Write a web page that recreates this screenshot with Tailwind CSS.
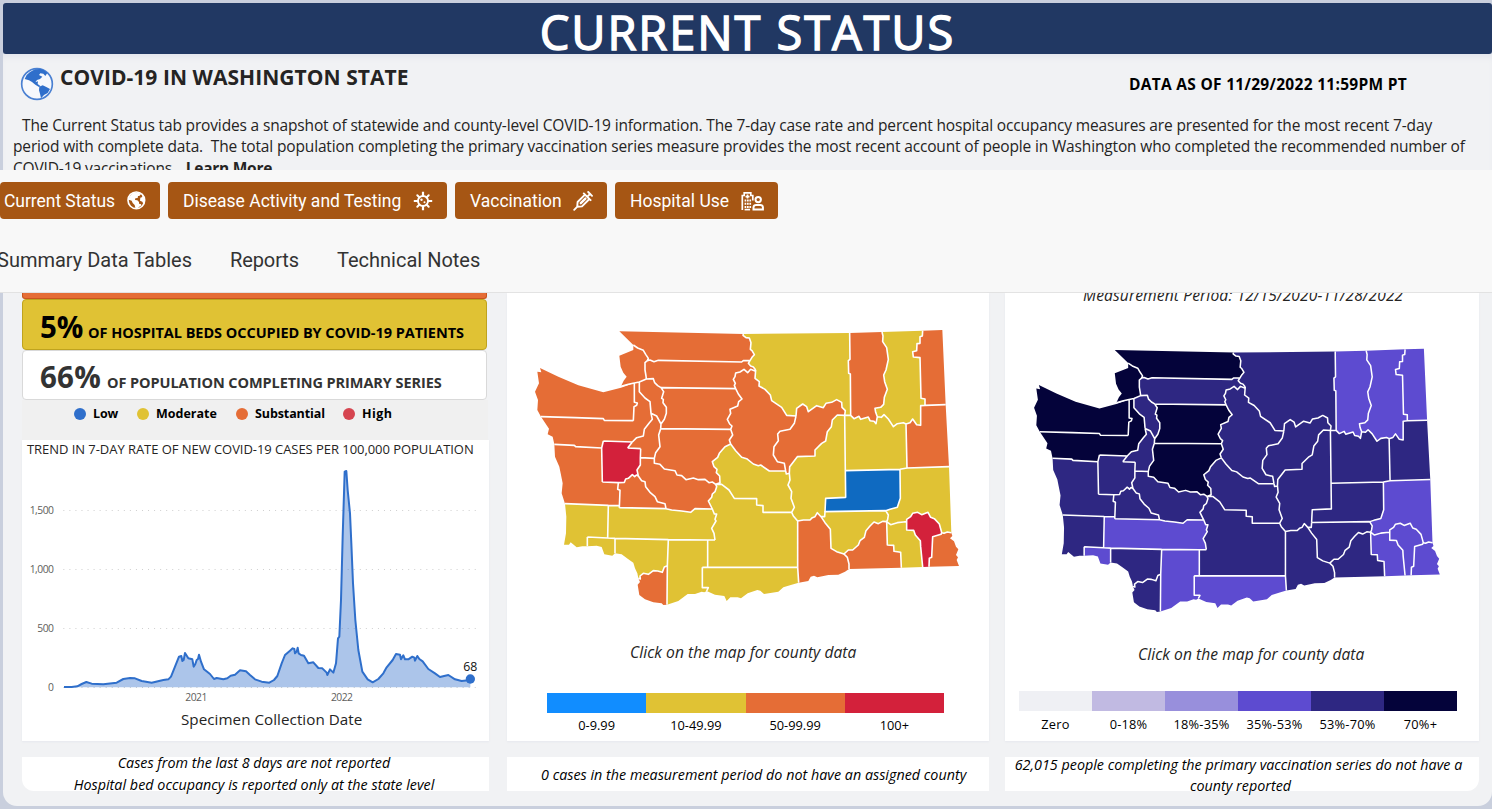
<!DOCTYPE html>
<html lang="en">
<head>
<meta charset="utf-8">
<title>COVID-19 Current Status</title>
<script src="https://cdn.jsdelivr.net/npm/@tailwindcss/browser@4"></script>
</head>
<body class="w-[1492px] h-[809px] overflow-hidden bg-[#c9cfdd] font-['Open_Sans','Noto_Sans',sans-serif] text-[#252423] flex flex-col">

<header class="h-[170px] shrink-0 overflow-hidden pl-[3px] pt-[3px]">
  <div class="h-[51px] bg-[#213863] rounded-[3px] flex justify-center items-center text-white text-[47px] leading-[51px] whitespace-nowrap [-webkit-text-stroke:1.4px_white]"><span class="mt-[8px] tracking-[1.9px]">CURRENT STATUS</span></div>
  <div class="h-[116px] bg-[#f1f2f4] shadow-[inset_0_6px_6px_-3px_#e2e5ec]">
    <div class="flex h-[62px] pl-[17px]">
      <svg class="mt-[13px] w-[34px] h-[34px]" viewBox="0 0 102 102" fill="#2f6fcb"><circle cx="51" cy="51" r="46" fill="#f6f8fc" stroke="#4a80d2" stroke-width="5"/><path d="M14 36 20 24 30 15 45 7 60 6 71 9 82 18 76 27 70 20 61 19 57 24 67 29 60 36 51 39 46 46 54 43 53 51 62 58 57 60 46 53 36 45 27 40Z"/><path d="M58 59 68 55 79 60 90 66 83 78 72 84 63 94 60 80 57 70Z"/></svg>
      <h1 class="ml-[6px] mt-[9px] text-[21px] leading-[28px] font-bold whitespace-nowrap tracking-[0.05px] h-[28px]">COVID-19 IN WASHINGTON STATE</h1>
      <div class="ml-auto mr-[85px] mt-[20px] text-[15.5px] leading-[20px] h-[20px] font-bold text-black whitespace-nowrap tracking-[0.29px]">DATA AS OF 11/29/2022 11:59PM PT</div>
    </div>
    <div class="pl-[10px] -mt-[1px] text-[15.5px] leading-[21.2px] whitespace-nowrap tracking-[-0.153px]">
      <p class="pl-[9px] tracking-[-0.156px]">The Current Status tab provides a snapshot of statewide and county-level COVID-19 information. The 7-day case rate and percent hospital occupancy measures are presented for the most recent 7-day</p>
      <p>period with complete data.&nbsp; The total population completing the primary vaccination series measure provides the most recent account of people in Washington who completed the recommended number of</p>
      <p class="mt-[1px]">COVID-19 vaccinations. &nbsp;<b class="ml-[2px] tracking-[-0.25px]">Learn More</b></p>
    </div>
  </div>
</header>

<nav class="h-[123px] shrink-0 bg-[#f8f8f8] border-b border-[#e2e2e2] font-[Roboto] whitespace-nowrap overflow-hidden">
  <div class="flex gap-2 mt-[12px] text-white text-[17.5px] leading-[37px] h-[37px] *:bg-[#a65614] *:rounded-[4px] *:flex *:items-center *:h-[37px]">
    <a class="w-[160px] pl-[4px]"><span class="w-[111px] tracking-[-0.05px] pt-[2px]">Current Status</span>
      <svg class="ml-[12px] w-[19px] h-[19px]" viewBox="0 0 57 57" fill="#fff"><circle cx="28" cy="28" r="25" fill="none" stroke="#fff" stroke-width="5"/><path d="M7 18 17 6 33 4 42 9 37 15 33 15 32 21 25 22 24 27 31 28 36 33 36 38 41 39 44 43 36 48 30 54 25 50 23 42 17 36 14 29 5 26Z"/><path d="M45 10 53 22 54 36 49 38 46 32 39 29 40 20 46 18Z"/></svg></a>
    <a class="w-[279px] pl-[15px]"><span class="w-[218px] pt-[2px]">Disease Activity and Testing</span>
      <svg class="ml-[12px] w-[20px] h-[20px]" viewBox="0 0 20 20" fill="none" stroke="#fff"><circle cx="10" cy="10" r="5" stroke-width="2"/><path stroke-width="2.2" d="M10 5V.8M10 15v4.200M5 10H.8M15 10h4.200"/><path stroke-width="2" stroke-linecap="round" d="M6.500 6.500 4.300 4.300M13.500 6.500 15.700 4.300M6.500 13.500 4.300 15.700M13.500 13.500 15.700 15.700"/><g fill="#fff" stroke="none"><circle cx="8.500" cy="8.800" r="1.200"/><circle cx="11.500" cy="11.200" r="1"/></g></svg></a>
    <a class="w-[152px] pl-[15px]"><span class="w-[92px] pt-[2px]">Vaccination</span>
      <svg class="ml-[11px] w-[20px] h-[20px]" viewBox="0 0 20 20" fill="none" stroke="#fff" stroke-width="1.900" stroke-linecap="round" stroke-linejoin="round"><path d="M1.200 18.800 4.800 15.200M4.200 15.800 4.600 11 12 3.600 16.400 8 9 15.400ZM10.800 2.400 17.600 9.200M14.500 5.500 17.200 2.800M15.200 1 19 4.800"/><path d="M7.800 12.200 12.400 7.600" stroke-width="2.400"/></svg></a>
    <a class="w-[163px] pl-[15px]"><span class="w-[99px] pt-[2px]">Hospital Use</span>
      <svg class="ml-[12px] w-[24px] h-[20px]" viewBox="0 0 24 20" fill="none" stroke="#fff" stroke-width="1.700"><path d="M1.300 19V4.500H3.200V1.800H9.800V4.500H11.800V9.500"/><path d="M6.500 3.600v4M4.500 5.600h4"/><path d="M3.600 9.500h6.500M3.600 12.700h6.500M3.600 15.900h6.500" stroke-dasharray="1.700 .7" stroke-width="2"/><path d="M3.600 18.600h5.500"/><circle cx="17.200" cy="8.600" r="2.700" stroke-width="2"/><path d="M12.500 18.400v-2.200q.3-2.200 2.600-2.200h4.200q2.300 0 2.600 2.200v2.200z" stroke-width="2"/></svg></a>
  </div>
  <div class="flex -ml-[3px] mt-[28px] text-[20px] leading-[26px] text-[#333] gap-[38px]">
    <span class="w-[195px]">Summary Data Tables</span><span class="w-[69px] tracking-[-0.1px]">Reports</span><span>Technical Notes</span>
  </div>
</nav>

<main class="h-[516px] shrink-0 pl-[3px] pb-[3px]">
<div class="h-[513px] bg-[#f1f2f4] rounded-b-[14px] pl-[19px] flex">

  <section class="w-[467px] flex flex-col">
    <div class="h-[6px] w-[465px] bg-[#e56d36] border-x border-b border-[#c9551f] rounded-b-[3px]"></div>
    <div class="h-[51px] w-[465px] bg-[#e0c234] border border-[#bfa31e] rounded-[4px] pl-[17px] text-black font-bold whitespace-nowrap flex items-baseline leading-[54px]">
      <span class="text-[29.5px] w-[48px] tracking-[-0.2px]">5%</span><span class="text-[14.5px] tracking-[-0.042px]">OF HOSPITAL BEDS OCCUPIED BY COVID-19 PATIENTS</span></div>
    <div class="h-[50px] w-[465px] bg-white border border-[#d9d9d9] rounded-[4px] pl-[17px] text-[#333] font-bold whitespace-nowrap flex items-baseline leading-[52px]">
      <span class="text-[29.5px] w-[67px] tracking-[0.2px]">66%</span><span class="text-[14.5px] tracking-[-0.08px]">OF POPULATION COMPLETING PRIMARY SERIES</span></div>
    <div class="h-[40px] w-[466px] bg-[#f0f0f0] text-black text-[12.5px] font-bold flex leading-[28px] pl-[52px] whitespace-nowrap">
      <i class="w-3 h-3 rounded-full bg-[#2f6fcb] mt-[8px] mr-[7px]"></i><span class="w-[44px] tracking-[-0.15px]">Low</span>
      <i class="w-3 h-3 rounded-full bg-[#e0c234] mt-[8px] mr-[7px]"></i><span class="w-[80px]">Moderate</span>
      <i class="w-3 h-3 rounded-full bg-[#e56d36] mt-[8px] mr-[7px]"></i><span class="w-[88px] tracking-[-0.1px]">Substantial</span>
      <i class="w-3 h-3 rounded-full bg-[#d64550] mt-[8px] mr-[7px]"></i><span class="tracking-[0.4px]">High</span>
    </div>
    <div class="h-[301px] bg-white shadow-[0_1px_2px_#e6e8ee] flex flex-col">
      <h2 class="text-[13px] leading-[18px] h-[18px] pl-[5px] whitespace-nowrap tracking-[-0.05px]">TREND IN 7-DAY RATE OF NEW COVID-19 CASES PER 100,000 POPULATION</h2>
      <svg class="w-[467px] h-[246px]" viewBox="66 -6 1401 738">
        <g stroke="#cfcfcf" stroke-width="3" stroke-dasharray="3 15.15"><path d="M190 151.500H1440M190 328.500H1440M190 505.500H1440M190 682.500H1440"/></g>
        <path id="area" fill="#2f6fcb" fill-opacity=".4"/>
        <path id="line" fill="none" stroke="#2f6fcb" stroke-width="6" stroke-linejoin="round"/>
        <circle cx="1411" cy="657" r="14" fill="#2f6fcb"/>
        <g font-size="31" fill="#605e5c" text-anchor="end"><text x="162" y="161" textLength="73">1,500</text><text x="162" y="338" textLength="73">1,000</text><text x="162" y="515" textLength="50">500</text><text x="162" y="692">0</text></g>
        <g font-size="31" fill="#605e5c" text-anchor="middle"><text x="589" y="722" textLength="66">2021</text><text x="1026" y="722" textLength="66">2022</text></g>
        <text x="1411" y="633" font-size="37" text-anchor="middle" fill="#111">68</text>
      </svg>
      <p class="text-[15.2px] leading-[20px] h-[20px] mt-[5px] pl-[159px] whitespace-nowrap tracking-[0.04px]">Specimen Collection Date</p>
    </div>
    <div class="mt-4 h-[34px] bg-white rounded-bl-[12px] text-[14.3px] leading-[22px] italic text-black text-center whitespace-nowrap pr-[3px]">
      <p class="-mt-[5px]">Cases from the last 8 days are not reported</p>
      <p class="tracking-[0.03px]">Hospital bed occupancy is reported only at the state level</p>
    </div>
  </section>

  <section class="ml-[18px] w-[482px] flex flex-col">
    <div class="h-[448px] bg-white shadow-[0_1px_2px_#e6e8ee] flex flex-col">
      <svg class="mt-[27px] ml-[18px] w-[460px] h-[300px] shrink-0" viewBox="0 0 1380 900"><g id="map1"></g></svg>
      <p class="mt-[22px] h-[20px] leading-[20px] text-[15.6px] italic pl-[123px] whitespace-nowrap tracking-[0.05px]">Click on the map for county data</p>
      <div class="mt-[31px] ml-[40px] w-[397px] h-5 grid grid-cols-4"><i class="bg-[#118dff]"></i><i class="bg-[#e0c234]"></i><i class="bg-[#e56d36]"></i><i class="bg-[#d3213b]"></i></div>
      <div class="mt-[2px] ml-[40px] w-[397px] grid grid-cols-4 text-center text-[12.8px] leading-[20px] text-black"><p>0-9.99</p><p>10-49.99</p><p>50-99.99</p><p>100+</p></div>
    </div>
    <div class="mt-4 h-[34px] bg-white text-[14.3px] leading-[35px] italic text-black pl-[34px] whitespace-nowrap tracking-[0.02px]">0 cases in the measurement period do not have an assigned county</div>
  </section>

  <section class="ml-[16px] w-[474px] flex flex-col">
    <div class="h-[448px] bg-white shadow-[0_1px_2px_#e6e8ee] flex flex-col overflow-hidden">
      <p class="-mt-[8px] h-[20px] leading-[21px] pl-[78px] text-[15.6px] italic whitespace-nowrap tracking-[0.12px]">Measurement Period: 12/15/2020-11/28/2022</p>
      <svg class="mt-[35px] ml-[15px] w-[453px] h-[280px] shrink-0" viewBox="0 0 1359 840"><g id="map2" transform="translate(13.500 -2.500) scale(.957)"></g></svg>
      <p class="mt-[24px] h-[20px] leading-[20px] pl-[133px] text-[15.6px] italic whitespace-nowrap tracking-[0.05px]">Click on the map for county data</p>
      <div class="mt-[27px] ml-[14px] w-[438px] h-5 grid grid-cols-6"><i class="bg-[#eff0f4]"></i><i class="bg-[#c1bae2]"></i><i class="bg-[#988fdc]"></i><i class="bg-[#5d4bd0]"></i><i class="bg-[#2e2782]"></i><i class="bg-[#04033a]"></i></div>
      <div class="mt-[3px] ml-[14px] w-[438px] grid grid-cols-6 text-center text-[12.8px] leading-[20px] text-black whitespace-nowrap tracking-[0.22px]"><p>Zero</p><p>0-18%</p><p>18%-35%</p><p>35%-53%</p><p>53%-70%</p><p>70%+</p></div>
    </div>
    <div class="mt-4 h-[34px] bg-white rounded-br-[12px] text-[14.3px] leading-[21px] italic text-black text-center whitespace-nowrap pr-[7px] tracking-[0.02px]">
      <p class="-mt-[3px]">62,015 people completing the primary vaccination series do not have a</p>
      <p class="pl-[4px]">county reported</p>
    </div>
  </section>
</div>
</main>

<script>
// Case-rate series, in chart units (three per pixel)
const s = '192,681 215,681 232,679 245,672 259,666 275,671 310,673 350,668 370,657 390,654 405,655 425,663 455,668 490,660 505,658 513,650 525,620 537,590 544,588 547,603 551,600 555,579 565,595 577,598 581,620 586,612 590,600 594,597 597,584 603,605 612,628 630,642 642,657 650,654 670,658 682,655 692,647 705,644 720,631 738,634 750,645 765,658 785,665 808,668 822,660 832,648 845,610 855,585 870,572 878,565 883,567 885,580 890,575 893,563 896,580 903,585 912,587 925,610 940,607 955,624 967,625 980,638 982,645 990,628 1000,638 1008,610 1014,535 1018,530 1023,420 1028,230 1034,35 1039,33 1043,90 1050,160 1054,250 1059,370 1066,480 1075,570 1087,635 1103,658 1118,667 1135,657 1150,640 1160,622 1178,600 1188,582 1200,584 1203,598 1210,586 1215,598 1225,598 1237,590 1243,593 1245,602 1252,588 1258,597 1268,604 1285,627 1305,640 1320,651 1345,645 1365,658 1385,663 1411,660';
document.getElementById('line').setAttribute('d', 'M' + s);
document.getElementById('area').setAttribute('d', 'M' + s + ' 1411,682 192,682Z');

// County junctions: western ones first, then eastern ones with their own x origin
const N = {A:[283,34],B:[655,42],C:[675,122],D:[692,150],E:[632,206],F:[325,75],W:[367,122],G:[288,199],J:[328,189],I:[343,186],H:[364,177],K:[325,302],L:[48,290],M:[408,203],P:[378,280],O:[407,326],n:[408,312],Q:[322,366],R:[235,363],S:[308,384],T:[347,386],U:[346,413],u:[388,415],V:[340,468],X:[280,488],Y:[232,486],Z:[230,384],AA:[88,373],AB:[617,328],AC:[617,372],AD:[572,493],AE:[423,566],AF:[562,567],AG:[283,563],AH:[283,557],AI:[120,551],AJ:[250,556],AK:[248,654],AL:[187,679],AM:[187,651],AN:[270,655],AO:[270,700],AP:[570,660],AQ:[548,660],AR:[430,659],AS:[427,737],AT:[340,775],AU:[426,854],AV:[548,742],AW:[532,742],AX:[545,813]};
const E = {AY:[173,742],AZ:[176,788],BA:[155,577],BB:[173,603],BD:[243,590],BE:[312,702],BF:[327,747],BG:[440,605],BH:[484,743],BI:[437,572],BJ:[500,605],BK:[548,741],BL:[605,638],BM:[567,740],BN:[634,638],BO:[657,738],BP:[480,448],BQ:[501,444],BR:[627,440],BS:[316,452],BT:[255,575],BU:[314,286],BV:[332,286],BW:[412,290],BX:[498,312],BY:[555,256],BZ:[617,254],CA:[329,39],CB:[426,36],CC:[548,32],CD:[607,30],CE:[168,288],CF:[137,453],CG:[148,460]};
for (const k in E) N[k] = [E[k][0] + 645, E[k][1]];

// Points between junctions; a leading ">" marks the eastern x origin
const arcs = {
'B C':'654,46 663,53 673,54 678,68 676,88 681,92 688,104 681,112',
'C D':'670,130 677,138 685,141','D E':'690,153 677,148 668,158 657,148 645,156 632,159 630,170 625,178 631,190 628,196',
'W C':'375,120 387,125 400,121 650,126 655,122','F W':'338,84 355,91 362,103 370,115','F G':'325,90 283,107 287,140 295,158 305,170 296,182',
'G J':'310,193','W H':'360,128 360,150 363,168','H M':'385,176 389,188 398,197','J K':'328,247 337,249 335,256 327,260',
'K L':'238,301 235,296 150,293','L J':'37,270 39,240 30,215 42,190 37,155 49,157 45,144 100,170 160,196 235,217 288,203',
'I P':'343,215 360,234 375,245','P n':'395,288','n M':'418,298 424,280 424,262 414,248 415,238 410,235 416,215','P Q':'382,298 372,310 358,328 355,348 335,353',
'L AA':'60,308 72,326 68,343 83,350','AA Z':'148,376 152,380','Q S':'','U V':'346,435 336,450','V X':'334,465 329,470 322,464 310,475 302,477 298,487',
'M E':'','E AB':'640,222 651,237 641,245 638,258 615,268 617,280 607,298 614,312 621,318','AB AC':'623,345 613,360','AC AD':'600,380 583,400 578,412 562,425 567,440 576,448 574,458 584,468 585,488',
'n O':'','O u':'401,345 405,380 392,398','u AD':'388,430 405,433 418,447 450,452 456,465 470,467 483,479 505,474 520,479 540,478 552,488 562,486',
'V AE':'350,482 360,485 362,500 375,517 390,530 397,545 420,551','AE AF':'440,570 470,573 497,577 510,566','AD AF':'575,500 570,515 562,522 560,532 550,543',
'X AG':'278,508 285,511','AI AA':'110,520 113,490 107,460 103,440 90,410','AI AL':'124,590 123,640 117,674 132,674 137,667 155,682 172,679','AL AO':'215,677 230,681 238,703 262,707',
'AF AP':'568,582 575,582 570,598 573,603 560,625 567,640','AO AT':'290,703 308,716 325,728 330,745 337,760','AS AT':'418,741 412,757 398,753 385,752 370,763 355,760 345,768 346,777',
'AT AU':'345,786 338,794 343,825 360,838 385,847 410,850 415,855','AW AX':'532,803 550,803','AU AX':'460,843 488,822 510,822 530,815 538,817',
'AX AZ':'570,824 598,828 605,843 616,832 638,832 648,835 668,820 697,810 706,812 717,822 760,815 775,802 800,794',
'AD BA':'590,493 612,510 628,535 695,536 695,555 714,557 714,577','BB BD':'>190,600 210,600 217,593 225,590 232,578','BA BB':'>160,588','BD BE':'>255,608 271,628 273,685 290,695',
'BE BF':'>322,712 327,732','BE BG':'>325,690 338,690 355,675 360,662 373,652 378,632 390,618 402,606 415,611 428,604','BG BH':'>442,675 461,676 462,694 482,697','AZ BF':'>205,783 212,770 222,767 232,772 265,765 295,764 315,755',
'BI BG':'>445,585 443,598','BG BJ':'>452,614 472,608 490,606','BJ BK':'>500,630 521,631 526,645 541,662 542,680','BJ BL':'>500,598 512,590 518,580 533,577 545,584 564,577 572,592 583,596 598,612 603,630',
'BL BM':'>603,643 578,650 575,712 568,715','BL BN':'>612,640 622,636','BN BO':'>637,648 630,655 642,664 648,680 655,688 648,705 654,712 650,720','BP BI':'>481,535 472,562 450,568',
'BS BT':'>317,532 257,535','BD BT':'>254,590','BV BW':'>342,296 357,289 362,298 385,291 390,302 402,304 408,311','BW BX':'>424,292 432,284 445,297 460,320 472,311 490,308',
'BX BY':'>510,308 518,297 530,314 542,316 542,257','CA BV':'>330,118 325,122 326,160 331,162','CB BW':'>429,48 428,65 440,83 445,118 438,150 431,165 434,185 442,208 433,232 431,253 422,262 405,265 407,277',
'CC BY':'>547,48 540,50 540,70 531,71 530,92 518,95 520,111 540,113 543,235 555,237','D CE':'>45,175 58,185 57,198 75,208 91,225 95,242 125,262 140,286','CE BU':'>170,265 188,252 200,260 205,275 230,257 250,263 258,250 275,247 290,239 305,247 306,262 316,272',
'CE CF':'>163,310 150,328 120,334 113,342 115,362 102,380 100,405 112,425 133,430','AC CF':'632,392 650,412 665,416 685,432 700,437 707,435 733,453','CG BA':'>150,480 144,495 155,515 153,535 163,562','CF CG':'>139,462',
'CG BU':'>149,440 172,410 225,408 225,390 245,370 257,363 262,335 274,320 277,300 292,285'};

// Counties as rings of junctions, with the case-rate and vaccination colours
const o = '#e56d36', y = '#e0c234', r = '#d3213b', b = '#0f6ac1', k = '#04033a', d = '#2e2782', l = '#5d4bd0';
const counties = [
['A B C W F',o,k],['F W H I J G',o,k],['W C D E M H',o,d],['J K L',o,k],['J K L AA Z R Q P I',o,k],['I P n M H',o,d],['P n O u U T S Q',o,d],
['M E AB O n',o,k],['O AB AC AD u',o,k],['R Q S T U V X Y Z',r,d],['AA Z Y X AG AH AJ AI',o,d],['u AD AF AE V U',o,d],['X V AE AG',o,d],
['AI AJ AK AM AL',y,d],['AL AM AK AN AO',y,l],['AJ AH AG AE AF AP AQ AR AN AK',y,l],['AN AR AS AT AO',y,d],['AS AU AT',o,d],['AR AQ AV AW AX AU AS',y,l],['AW AV AY AZ AX',y,l],
['AD AF AP AQ AV AY BB BA',y,d],['AC CF CG BA AD',y,d],['D CE CF AC AB E',o,d],['B CA BV BU CE D C',y,d],['CE BU CG CF',o,d],['CG BU BS BT BD BB BA',y,d],
['BB BD BE BF AZ AY',o,d],['BD BT BI BG BE',y,d],['BE BG BH BF',o,d],['BG BJ BK BH',y,l],['BJ BL BM BK',r,l],['BL BN BO BM',o,l],['BI BP BQ BR BN BL BJ BG',y,l],
['BS BP BI BT',b,d],['BU BV BW BX BQ BP BS',y,d],['BX BY BZ BR BQ',o,d],['CA CB BW BV',o,l],['CB CC BY BX BW',y,l],['CC CD BZ BY',o,l]];
function pts(t) { const e = t[0] === '>'; return t.replace('>', '').split(' ').filter(Boolean).map(p => { const a = p.split(',').map(Number); return [a[0] + (e ? 645 : 0), a[1]]; }); }
function seg(p, q) { if (arcs[p + ' ' + q] !== undefined) return pts(arcs[p + ' ' + q]); if (arcs[q + ' ' + p] !== undefined) return pts(arcs[q + ' ' + p]).reverse(); return []; }
const used = {}; let f1 = '', f2 = '', lines = '';
for (const [ring, c1, c2] of counties) {
  const n = ring.split(' '); let path = [];
  n.forEach((p, i) => {
    const q = n[(i + 1) % n.length], m = seg(p, q), key = [p, q].sort().join();
    path.push(N[p], ...m);
    used[key] = (used[key] || 0) + 1;
    if (used[key] === 2) lines += 'M' + [N[p], ...m, N[q]].join(' ');
  });
  f1 += `<path fill="${c1}" d="M${path.join(' ')}Z"/>`;
  f2 += `<path fill="${c2}" d="M${path.join(' ')}Z"/>`;
}
lines += 'M' + [N.G, ...seg('G', 'J'), N.J].join(' ') + 'M' + [N.J, N.I].join(' ');
const border = `<path d="${lines}" fill="none" stroke="#fff" stroke-width="4.800" stroke-linejoin="round"/>`;
document.getElementById('map1').innerHTML = f1 + border;
document.getElementById('map2').innerHTML = f2 + border;
</script>
</body>
</html>
